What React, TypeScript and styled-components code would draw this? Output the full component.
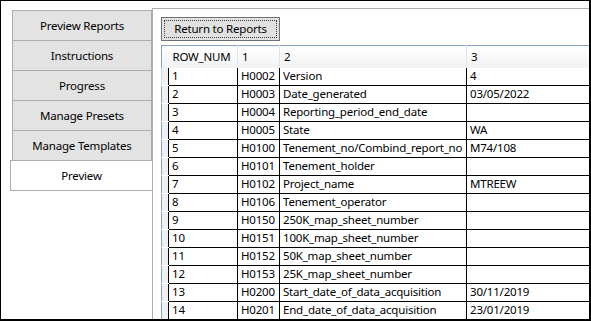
import styled, { createGlobalStyle } from 'styled-components';

const GlobalStyle = createGlobalStyle`
  html, body {
    margin: 0;
    padding: 0;
    background: #ffffff;
  }
  * {
    box-sizing: border-box;
  }
`;

const rows: [string, string, string, string][] = [
  ['1', 'H0002', 'Version', '4'],
  ['2', 'H0003', 'Date_generated', '03/05/2022'],
  ['3', 'H0004', 'Reporting_period_end_date', ''],
  ['4', 'H0005', 'State', 'WA'],
  ['5', 'H0100', 'Tenement_no/Combind_report_no', 'M74/108'],
  ['6', 'H0101', 'Tenement_holder', ''],
  ['7', 'H0102', 'Project_name', 'MTREEW'],
  ['8', 'H0106', 'Tenement_operator', ''],
  ['9', 'H0150', '250K_map_sheet_number', ''],
  ['10', 'H0151', '100K_map_sheet_number', ''],
  ['11', 'H0152', '50K_map_sheet_number', ''],
  ['12', 'H0153', '25K_map_sheet_number', ''],
  ['13', 'H0200', 'Start_date_of_data_acquisition', '30/11/2019'],
  ['14', 'H0201', 'End_date_of_data_acquisition', '23/01/2019'],
];

const tabs = [
  'Preview Reports',
  'Instructions',
  'Progress',
  'Manage Presets',
  'Manage Templates',
  'Preview',
];

const Window = styled.div`
  width: 591px;
  height: 321px;
  border-style: solid;
  border-color: #000000;
  border-width: 1px 2px 2px 1px;
  overflow: hidden;
  display: flex;
  font-family: 'Noto Sans', 'Open Sans', sans-serif;
  font-size: 11.5px;
  letter-spacing: -0.2px;
  color: #000000;
`;

const TabStrip = styled.div`
  width: 151px;
  flex: none;
  padding: 9px 0 0 9px;
  display: flex;
  flex-direction: column;
`;

const Tab = styled.div<{ $active?: boolean }>`
  height: 31px;
  margin-top: -1px;
  margin-left: ${(p) => (p.$active ? '0' : '2px')};
  border: 1px solid #adadad;
  border-right: ${(p) => (p.$active ? 'none' : '1px solid #adadad')};
  background: ${(p) => (p.$active ? '#ffffff' : '#e3e3e3')};
  display: flex;
  align-items: center;
  justify-content: center;
  white-space: nowrap;
  padding-bottom: 1px;

  &:first-child {
    margin-top: 0;
  }
`;

const Panel = styled.div`
  flex: 1;
  margin-top: 7px;
  border-top: 1px solid #adadad;
  border-left: 1px solid #adadad;
  padding: 8px 0 0 8px;
  display: flex;
  flex-direction: column;
  gap: 4px;
  min-width: 0;
`;

const ReturnButton = styled.button`
  width: 119px;
  height: 24px;
  padding: 2px;
  border: 1px solid #6f6f6f;
  background: #e1e1e1;
  font: inherit;
  letter-spacing: inherit;
  color: #000000;
  display: flex;
`;

const FocusRing = styled.span`
  flex: 1;
  border: 1px dotted #3c3c3c;
  display: flex;
  align-items: center;
  justify-content: center;
  padding-bottom: 1px;
`;

const Grid = styled.table`
  border-collapse: collapse;
  table-layout: fixed;
  border-top: 1px solid #8aa3bf;
  border-left: 1px solid #8aa3bf;
  width: 460px;
`;

const HeadCell = styled.th<{ $w: number }>`
  width: ${(p) => p.$w}px;
  height: 22px;
  padding: 0 0 1px 4px;
  text-align: left;
  font-weight: normal;
  white-space: nowrap;
  overflow: hidden;
  background: linear-gradient(#ffffff, #f1f2f4);
  border-right: 1px solid #e2e3e6;

  &:first-child {
    padding: 0;
    border-right: none;
  }
`;

const RowHead = styled.td<{ $current?: boolean }>`
  height: 18px;
  padding: 0;
  background: #f0f0f0;
  border-bottom: 1px solid #ffffff;
  border-left: ${(p) => (p.$current ? '1px solid #c6dcf2' : 'none')};
`;

const Cell = styled.td`
  height: 18px;
  padding: 0 0 1px 3px;
  border: 1px solid #000000;
  border-top: none;
  white-space: nowrap;
  overflow: hidden;
  line-height: 16px;
`;

export default function App() {
  return (
    <>
      <GlobalStyle />
      <Window>
        <TabStrip>
          {tabs.map((t) => (
            <Tab key={t} $active={t === 'Preview'}>
              {t}
            </Tab>
          ))}
        </TabStrip>
        <Panel>
          <ReturnButton>
            <FocusRing>Return to Reports</FocusRing>
          </ReturnButton>
          <Grid>
            <thead>
              <tr>
                <HeadCell $w={7} />
                <HeadCell $w={69}>ROW_NUM</HeadCell>
                <HeadCell $w={42}>1</HeadCell>
                <HeadCell $w={187}>2</HeadCell>
                <HeadCell $w={155}>3</HeadCell>
              </tr>
            </thead>
            <tbody>
              {rows.map((r, i) => (
                <tr key={r[0]}>
                  <RowHead $current={i === 0} />
                  {r.map((v, j) => (
                    <Cell key={j}>{v}</Cell>
                  ))}
                </tr>
              ))}
            </tbody>
          </Grid>
        </Panel>
      </Window>
    </>
  );
}
